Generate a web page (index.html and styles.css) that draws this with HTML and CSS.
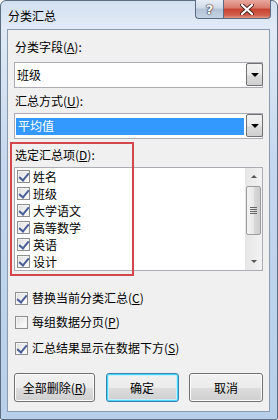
FILE: index.html
```html
<!DOCTYPE html>
<html lang="zh-CN">
<head>
    <meta charset="UTF-8">
    <meta name="viewport" content="width=device-width, initial-scale=1.0">
    <title>分类汇总</title>
    <link rel="stylesheet" href="styles.css">
</head>
<body>
    <div class="window">
        <div class="title-bar">
            <span class="title">分类汇总</span>
            <div class="caption-buttons">
                <div class="cap-btn help">?</div>
                <div class="cap-btn close">
                    <svg width="14" height="11" viewBox="0 0 14 11">
                        <path d="M2 1 L12 10 M12 1 L2 10" stroke="#4a2020" stroke-width="4" stroke-linecap="round"/>
                        <path d="M2 1 L12 10 M12 1 L2 10" stroke="#ffffff" stroke-width="2.2" stroke-linecap="round"/>
                    </svg>
                </div>
            </div>
        </div>

        <div class="client">
            <div class="label label-first">分类字段(<u>A</u>):</div>
            <div class="combo">
                <div class="combo-text">班级</div>
                <div class="combo-btn"><span class="arrow"></span></div>
            </div>

            <div class="label label-second">汇总方式(<u>U</u>):</div>
            <div class="combo combo-second">
                <div class="combo-text"><span class="selected">平均值</span></div>
                <div class="combo-btn"><span class="arrow"></span></div>
            </div>

            <div class="label label-third">选定汇总项(<u>D</u>):</div>
            <div class="listbox">
                <div class="list-items">
                    <div class="list-item"><span class="check checked"></span>姓名</div>
                    <div class="list-item"><span class="check checked"></span>班级</div>
                    <div class="list-item"><span class="check checked"></span>大学语文</div>
                    <div class="list-item"><span class="check checked"></span>高等数学</div>
                    <div class="list-item"><span class="check checked"></span>英语</div>
                    <div class="list-item"><span class="check checked"></span>设计</div>
                </div>
                <div class="scrollbar">
                    <div class="scroll-arrow up"></div>
                    <div class="scroll-track">
                        <div class="scroll-thumb">
                            <span class="grip"></span>
                        </div>
                    </div>
                    <div class="scroll-arrow down"></div>
                </div>
            </div>

            <div class="option option-first"><span class="check checked"></span>替换当前分类汇总(<u>C</u>)</div>
            <div class="option option-second"><span class="check"></span>每组数据分页(<u>P</u>)</div>
            <div class="option option-third"><span class="check checked"></span>汇总结果显示在数据下方(<u>S</u>)</div>

            <div class="buttons">
                <div class="btn btn-wide">全部删除(<u>R</u>)</div>
                <div class="btn btn-default">确定</div>
                <div class="btn">取消</div>
            </div>

            <!-- annotation box -->
            <div class="highlight"></div>
        </div>
    </div>
</body>
</html>
```

FILE: styles.css
```css
* {
    margin: 0;
    padding: 0;
    box-sizing: border-box;
}

body {
    font-family: "Noto Sans CJK SC", "Noto Sans", sans-serif;
    font-size: 12px;
    color: #000;
    width: 278px;
    height: 420px;
    overflow: hidden;
    background: #ffffff;
}

u {
    text-decoration: underline;
    text-underline-offset: 1px;
}

.window {
    width: 278px;
    height: 420px;
    border: 1px solid #5d6d80;
    border-radius: 6px 6px 2px 2px;
    background: linear-gradient(180deg, #d2e0f1 0%, #e1eaf6 6%, #c4d7ee 40%, #b8cfea 100%);
    padding: 0 7px 7px 6px;
    display: flex;
    flex-direction: column;
    position: relative;
}

.title-bar {
    height: 28px;
    display: flex;
    align-items: flex-start;
    justify-content: space-between;
}

.title {
    font-size: 12px;
    line-height: 14px;
    padding: 8px 0 0 1px;
}

.caption-buttons {
    display: flex;
    margin-right: -1px;
    margin-top: -1px;
}

.cap-btn {
    height: 19px;
    display: flex;
    align-items: center;
    justify-content: center;
    border: 1px solid #5a6a80;
    border-top: none;
}

.help {
    width: 28px;
    border-radius: 0 0 0 4px;
    border-right: none;
    background: linear-gradient(180deg, #e6edf5 0%, #d0dbe8 45%, #b3c3d6 50%, #c4d3e3 100%);
    color: #fff;
    font-family: "DejaVu Sans", sans-serif;
    font-weight: bold;
    font-size: 13px;
    line-height: 13px;
    text-shadow: 0 0 1px #333, 0 0 1px #333, 0 0 2px #333;
}

.close {
    width: 48px;
    border-radius: 0 0 4px 0;
    background: linear-gradient(180deg, #e8a89e 0%, #d87a6c 45%, #c7412f 50%, #d2604e 85%, #e09a86 100%);
}

.client {
    flex: 1;
    background: #f0f0f0;
    border: 1px solid #8a9bb0;
    padding: 0 6px 0 6px;
    display: flex;
    flex-direction: column;
    position: relative;
}

.label {
    line-height: 16px;
    height: 16px;
    padding-left: 1px;
}

.label-first {
    margin-top: 9px;
}

.label-second {
    margin-top: 5px;
}

.label-third {
    margin-top: 8px;
}

.combo {
    margin-top: 7px;
    height: 26px;
    background: #fff;
    border: 1px solid #abadb3;
    display: flex;
    align-items: stretch;
}

.combo-second {
    margin-top: 4px;
}

.combo-text {
    flex: 1;
    display: flex;
    align-items: center;
    padding-left: 2px;
    padding-right: 1px;
    line-height: 16px;
}

.selected {
    display: flex;
    align-items: center;
    width: 100%;
    height: 17px;
    background: #3399ff;
    color: #fff;
    padding-left: 2px;
    margin-left: -1px;
}

.combo-btn {
    width: 17px;
    margin: 0 -1px 1px 0;
    border: 1px solid #707070;
    border-radius: 2px;
    background: linear-gradient(180deg, #f2f2f2 0%, #ebebeb 50%, #dddddd 51%, #cfcfcf 100%);
    display: flex;
    align-items: center;
    justify-content: center;
}

.arrow {
    width: 0;
    height: 0;
    border-left: 4px solid transparent;
    border-right: 4px solid transparent;
    border-top: 4px solid #000;
}

.listbox {
    margin-top: 4px;
    height: 104px;
    background: #fff;
    border: 1px solid #abadb3;
    display: flex;
}

.list-items {
    flex: 1;
}

.list-item {
    height: 17px;
    line-height: 17px;
    display: flex;
    align-items: center;
    padding-left: 2px;
    font-size: 12px;
}

.check {
    width: 13px;
    height: 13px;
    border: 1px solid #8e8f8f;
    background: linear-gradient(135deg, #dcdcdc 0%, #f4f4f4 60%, #ffffff 100%);
    box-shadow: inset 0 0 0 1px #f4f4f4;
    margin-right: 3px;
    flex-shrink: 0;
    position: relative;
}

.check.checked::after {
    content: "";
    position: absolute;
    left: 3px;
    top: 0px;
    width: 4px;
    height: 8px;
    border-right: 2px solid #4a5f97;
    border-bottom: 2px solid #4a5f97;
    transform: rotate(40deg);
}

.scrollbar {
    width: 17px;
    background: linear-gradient(90deg, #e6e6e6 0%, #f2f2f2 100%);
    display: flex;
    flex-direction: column;
    align-items: center;
}

.scroll-arrow {
    height: 17px;
    width: 17px;
    display: flex;
    align-items: center;
    justify-content: center;
}

.scroll-arrow::after {
    content: "";
    width: 0;
    height: 0;
    border-left: 3px solid transparent;
    border-right: 3px solid transparent;
}

.up::after {
    border-bottom: 3px solid #555;
}

.down::after {
    border-top: 3px solid #555;
}

.scroll-track {
    flex: 1;
    width: 100%;
    padding: 1px 1px;
}

.scroll-thumb {
    height: 49px;
    border: 1px solid #9b9b9b;
    border-radius: 2px;
    background: linear-gradient(90deg, #f3f3f3 0%, #e8e8e8 50%, #d9d9d9 51%, #cdcdcd 100%);
    display: flex;
    align-items: center;
    justify-content: center;
}

.grip {
    width: 7px;
    height: 7px;
    background: repeating-linear-gradient(180deg, #666 0px, #666 1px, transparent 1px, transparent 2px);
}

.option {
    height: 16px;
    line-height: 16px;
    display: flex;
    align-items: center;
    padding-left: 1px;
}

.option .check {
    margin-right: 4px;
}

.option-first {
    margin-top: 19px;
}

.option-second {
    margin-top: 8px;
}

.option-third {
    margin-top: 10px;
}

.buttons {
    margin-top: 17px;
    display: flex;
    justify-content: space-between;
}

.btn {
    width: 74px;
    height: 29px;
    border: 1px solid #707070;
    border-radius: 3px;
    background: linear-gradient(180deg, #f2f2f2 0%, #ebebeb 50%, #dddddd 51%, #cfcfcf 100%);
    box-shadow: inset 0 0 0 1px #fcfcfc;
    display: flex;
    align-items: center;
    justify-content: center;
    line-height: 16px;
}

.btn-wide {
    width: 81px;
}

.btn-default {
    border-color: #3c7fb1;
    box-shadow: inset 0 0 0 1px #48d8fb, inset 0 0 0 2px #c2eefb;
    width: 73px;
}

.highlight {
    position: absolute;
    left: 2px;
    top: 112px;
    width: 124px;
    height: 134px;
    border: 2px solid #d3474a;
    pointer-events: none;
}
```
